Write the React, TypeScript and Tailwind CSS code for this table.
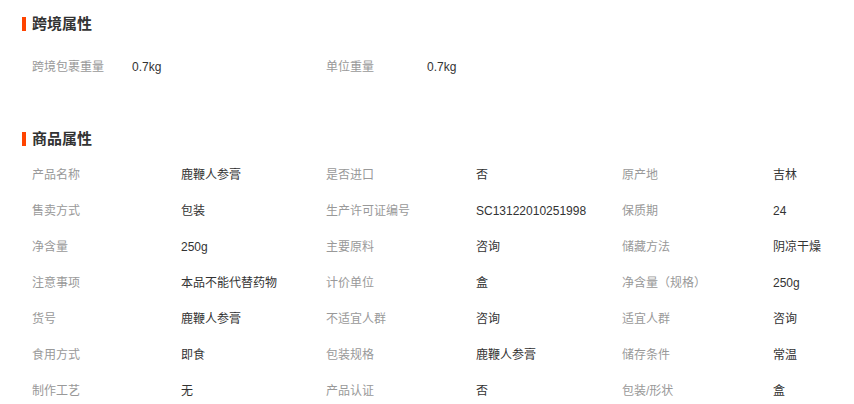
import React from "react";

const font = { fontFamily: '"Liberation Sans", "Noto Sans CJK SC", sans-serif' };

function Heading({ title }: { title: string }) {
  return (
    <div className="flex items-center h-[20px] pl-[22px]">
      <span className="w-[4px] h-[14px] bg-[#ff4400]" />
      <span className="ml-[6px] text-[15px] font-bold text-[#333] leading-[20px]">{title}</span>
    </div>
  );
}

const rows: string[][] = [
  ["产品名称", "鹿鞭人参膏", "是否进口", "否", "原产地", "吉林"],
  ["售卖方式", "包装", "生产许可证编号", "SC13122010251998", "保质期", "24"],
  ["净含量", "250g", "主要原料", "咨询", "储藏方法", "阴凉干燥"],
  ["注意事项", "本品不能代替药物", "计价单位", "盒", "净含量（规格）", "250g"],
  ["货号", "鹿鞭人参膏", "不适宜人群", "咨询", "适宜人群", "咨询"],
  ["食用方式", "即食", "包装规格", "鹿鞭人参膏", "储存条件", "常温"],
  ["制作工艺", "无", "产品认证", "否", "包装/形状", "盒"],
];

export default function App() {
  return (
    <div className="w-[854px] h-[404px] bg-white overflow-hidden pt-[14px] text-[12px]" style={font}>
      <Heading title="跨境属性" />
      <div className="mt-[15px] pl-[32px] grid grid-cols-[294px_294px] h-[36px] items-center">
        <div className="flex">
          <span className="w-[100px] text-[#999]">跨境包裹重量</span>
          <span className="text-[#333]">0.7kg</span>
        </div>
        <div className="flex">
          <span className="w-[101px] text-[#999]">单位重量</span>
          <span className="text-[#333]">0.7kg</span>
        </div>
      </div>
      <div className="mt-[44px]">
        <Heading title="商品属性" />
      </div>
      <div className="mt-[8px] pl-[32px]">
        {rows.map((r, i) => (
          <div key={i} className="grid grid-cols-[294px_296px_1fr] h-[36px] items-center">
            <div className="flex">
              <span className="w-[149px] text-[#999]">{r[0]}</span>
              <span className="text-[#333]">{r[1]}</span>
            </div>
            <div className="flex">
              <span className="w-[150px] text-[#999]">{r[2]}</span>
              <span className="text-[#333]">{r[3]}</span>
            </div>
            <div className="flex">
              <span className="w-[151px] text-[#999]">{r[4]}</span>
              <span className="text-[#333]">{r[5]}</span>
            </div>
          </div>
        ))}
      </div>
    </div>
  );
}
